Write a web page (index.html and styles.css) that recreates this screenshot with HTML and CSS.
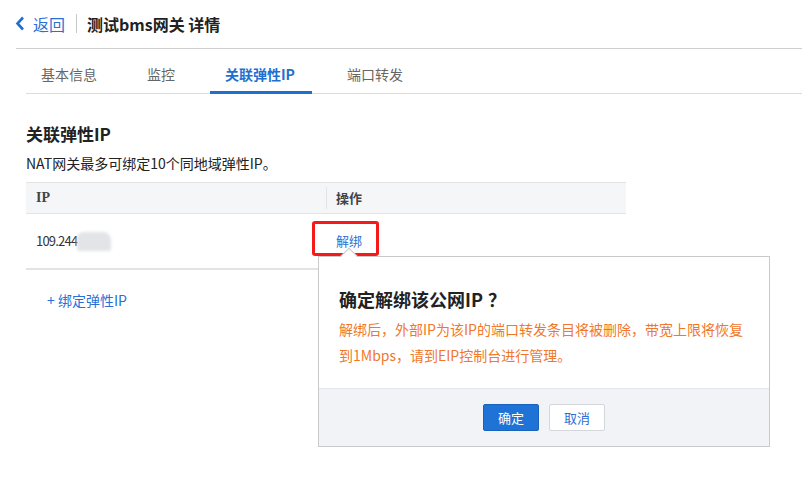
FILE: index.html
```html
<!DOCTYPE html>
<html lang="zh-CN">
<head>
<meta charset="utf-8">
<title>测试bms网关 详情</title>
<link rel="stylesheet" href="styles.css">
</head>
<body>
<div class="page">
  <div class="header">
    <a class="back">
      <svg class="back-icon" width="10" height="15" viewBox="0 0 10 15"><path d="M8 1.5 L2.5 7.5 L8 13.5" fill="none" stroke="#1f6fd1" stroke-width="2.6"/></svg>
      <span>返回</span>
    </a>
    <span class="divider"></span>
    <h1 class="title">测试bms网关 详情</h1>
  </div>
  <div class="tabs">
    <div class="tab">基本信息</div>
    <div class="tab">监控</div>
    <div class="tab active">关联弹性IP</div>
    <div class="tab">端口转发</div>
  </div>
  <div class="content">
    <h2 class="section-title">关联弹性IP</h2>
    <p class="desc">NAT网关最多可绑定10个同地域弹性IP。</p>
    <div class="table">
      <div class="thead">
        <div class="cell c-ip">IP</div>
        <div class="cell c-op"><span class="col-sep"></span>操作</div>
      </div>
      <div class="trow">
        <div class="cell c-ip"><span class="ip-num">109.244</span><span class="blur"></span></div>
        <div class="cell c-op"><a class="link">解绑</a></div>
      </div>
    </div>
    <a class="add-link">+ 绑定弹性IP</a>
  </div>

  <div class="highlight"></div>
  <div class="popover">
    <span class="arrow"></span>
    <div class="pop-body">
      <div class="pop-title">确定解绑该公网IP<span class="qmark">？</span></div>
      <div class="pop-text">解绑后，外部IP为该IP的端口转发条目将被删除，带宽上限将恢复到1Mbps，请到EIP控制台进行管理。</div>
    </div>
    <div class="pop-footer">
      <button class="btn btn-primary">确定</button>
      <button class="btn btn-default">取消</button>
    </div>
  </div>
</div>
</body>
</html>
```
FILE: styles.css
```css
* { box-sizing: border-box; }
html, body { margin: 0; padding: 0; background: #fff; }
body {
  font-family: "Noto Sans CJK SC", "Liberation Sans", sans-serif;
  color: #333;
  font-size: 14px;
  line-height: 20px;
}
.page { position: relative; width: 802px; height: 480px; overflow: hidden; }

.header {
  margin-left: 16px;
  height: 49px;
  border-bottom: 1px solid #cfcfcf;
  display: flex;
  align-items: center;
  padding-bottom: 1px;
}
.back {
  display: flex;
  align-items: center;
  color: #2b6fd6;
  font-size: 16px;
  line-height: 22px;
  margin-left: -1px;
}
.back-icon { margin-right: 8px; }
.divider {
  width: 1px;
  height: 19px;
  background: #c8c8c8;
  margin: 0 10px 0 11px;
}
.title {
  margin: 0;
  font-size: 16px;
  line-height: 22px;
  font-weight: bold;
  color: #222;
}

.tabs {
  margin-left: 26px;
  height: 45px;
  border-bottom: 1px solid #dcdcdc;
  display: flex;
  gap: 20px;
}
.tab {
  padding: 14px 15px 0;
  height: 45px;
  line-height: 22px;
  color: #666;
  font-size: 14px;
}
.tab.active {
  color: #1f6fd1;
  font-weight: bold;
  padding-right: 16px;
  min-width: 102px;
  border-bottom: 3px solid #1f6fd1;
}

.content { margin-left: 26px; padding-top: 28px; }
.section-title {
  margin: 0;
  font-size: 17px;
  font-weight: bold;
  color: #222;
  line-height: 24px;
}
.desc {
  margin: 7px 0 0;
  font-size: 14px;
  line-height: 20px;
  color: #222;
}
.table { width: 600px; margin-top: 9px; }
.thead {
  display: flex;
  height: 32px;
  background: #f5f6f8;
  border-top: 1px solid #e1e3e7;
  border-bottom: 1px solid #e1e3e7;
  font-size: 13px;
  font-weight: bold;
  color: #444;
}
.trow {
  display: flex;
  height: 56px;
  border-bottom: 2px solid #e1e3e7;
  font-size: 13px;
  color: #333;
}
.cell { display: flex; align-items: center; position: relative; }
.c-ip { width: 300px; padding-left: 10px; }
.c-op { flex: 1; padding-left: 10px; }
.col-sep {
  position: absolute;
  left: 0;
  top: 4px;
  width: 1px;
  height: 22px;
  background: #e1e3e7;
}
.thead .c-ip { font-family: "Liberation Serif", serif; font-size: 14px; }
.ip-num { letter-spacing: -0.8px; }
.blur {
  display: inline-block;
  width: 34px;
  height: 19px;
  background: #e3e4e7;
  border-radius: 6px 8px 2px 2px;
  filter: blur(1.5px);
}
.link { color: #2b6fd6; }
.add-link {
  display: inline-block;
  color: #2b6fd6;
  font-size: 14px;
  margin: 20px 0 0 21px;
}

.highlight {
  position: absolute;
  left: 312px;
  top: 221px;
  width: 67px;
  height: 35px;
  border: 3px solid #f41a1a;
  border-radius: 3px;
}
.popover {
  position: absolute;
  left: 318px;
  top: 256px;
  width: 452px;
  height: 191px;
  border: 1px solid #c9c9c9;
  background: #fff;
  display: flex;
  flex-direction: column;
}
.arrow {
  position: absolute;
  left: 24px;
  top: -7px;
  width: 12px;
  height: 12px;
  background: #fff;
  border-left: 1px solid #c9c9c9;
  border-top: 1px solid #c9c9c9;
  transform: rotate(45deg);
}
.pop-body {
  flex: 1;
  padding: 29px 20px 0;
}
.pop-title {
  font-size: 18px;
  font-weight: bold;
  color: #222;
  line-height: 26px;
}
.qmark { padding-left: 5px; }
.pop-text {
  margin-top: 4px;
  font-size: 14px;
  line-height: 26px;
  color: #f0782c;
}
.pop-footer {
  height: 58px;
  background: #f1f3f6;
  border-top: 1px solid #e2e5e9;
  display: flex;
  justify-content: center;
  align-items: center;
  gap: 10px;
}
.btn {
  width: 56px;
  height: 27px;
  font-family: inherit;
  font-size: 13px;
  line-height: 20px;
  border-radius: 2px;
  padding: 0;
}
.btn-primary { background: #1f72d6; border: 1px solid #1a63bd; color: #fff; }
.btn-default { background: #fff; border: 1px solid #d3d6db; color: #2b6fd6; }
```
